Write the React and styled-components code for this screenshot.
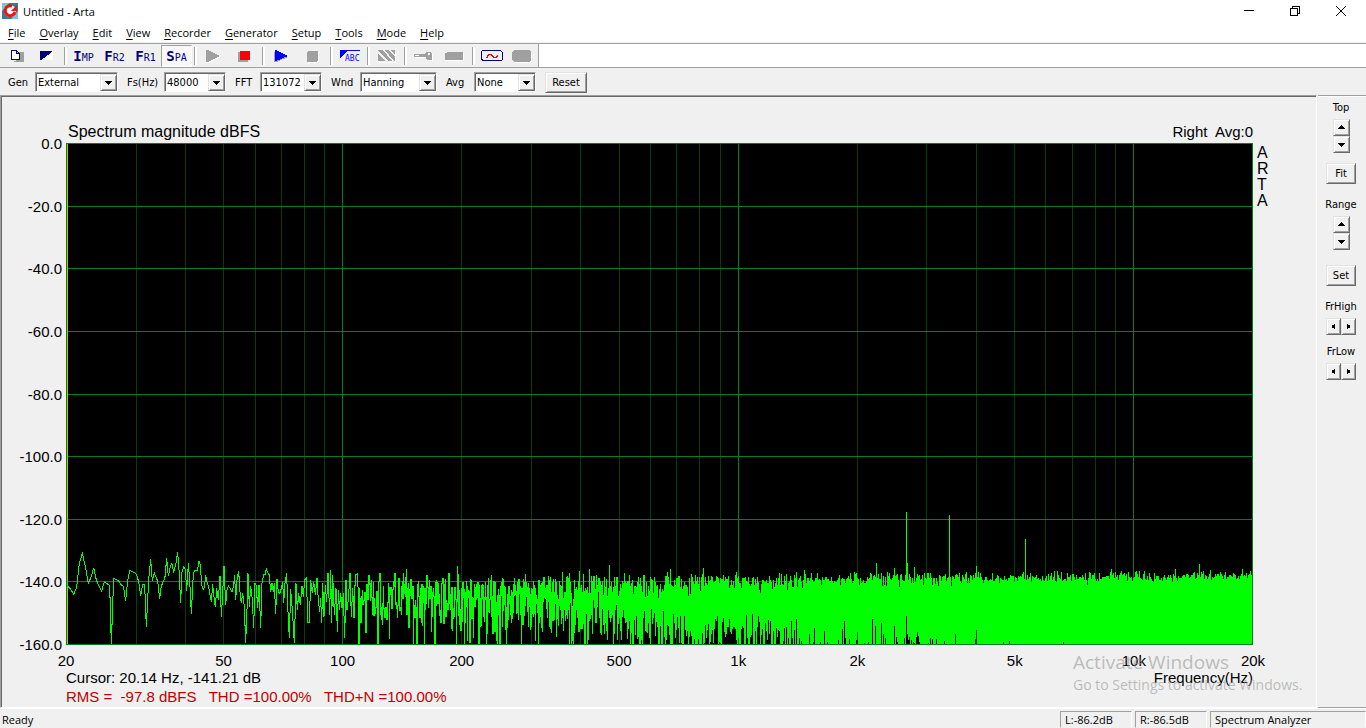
import styled, { createGlobalStyle, css } from 'styled-components';

const ui = '"Open Sans", "Noto Sans", sans-serif';
const dialog = '"DejaVu Sans Condensed", "DejaVu Sans", sans-serif';
const plotFont = '"Liberation Sans", Arial, sans-serif';

const GlobalStyle = createGlobalStyle`
  * {
    box-sizing: border-box;
  }
  body {
    margin: 0;
    background: #f0f0f0;
    color: #000;
    font-family: ${ui};
    font-size: 11px;
  }
  button,
  select {
    font: inherit;
    color: inherit;
    border-radius: 0;
  }
`;

const raised = css`
  background: #f0f0f0;
  border: 1px solid;
  border-color: #e3e3e3 #696969 #696969 #e3e3e3;
  box-shadow: inset 1px 1px 0 #fff, inset -1px -1px 0 #a0a0a0;
`;

const Window = styled.div`
  min-height: 100vh;
  display: flex;
  flex-direction: column;
`;

const TitleBar = styled.header`
  display: flex;
  align-items: center;
  height: 22px;
  padding: 0 2px;
  background: #fff;
  h1 {
    flex: 1;
    margin: 0 0 0 5px;
    font-size: 11px;
    font-weight: 400;
  }
`;

const WindowButton = styled.button`
  width: 46px;
  height: 22px;
  padding: 0;
  border: 0;
  background: none;
  svg {
    display: block;
    margin: 0 auto;
  }
`;

const MenuBar = styled.nav`
  display: flex;
  gap: 14px;
  height: 21px;
  padding: 0 8px;
  background: #fff;
  border-bottom: 1px solid #f0f0f0;
`;

const MenuItem = styled.button`
  padding: 1px 0 0;
  border: 0;
  background: none;
  line-height: 19px;
  u {
    text-underline-offset: 2px;
    text-decoration-skip-ink: none;
  }
`;

const ToolBar = styled.div`
  display: flex;
  height: 25px;
  background: #fff;
  border-top: 1px solid #a0a0a0;
  border-bottom: 1px solid #a0a0a0;
`;

const Tools = styled.div`
  display: flex;
  align-items: center;
  padding-top: 1px;
  background: #f0f0f0;
  border-right: 1px solid #a0a0a0;
`;

const ToolButton = styled.button`
  width: 31px;
  height: 22px;
  padding: 0;
  border: 1px solid transparent;
  background: none;
  color: #000080;
  font-family: 'DejaVu Sans Mono', monospace;
  font-size: 10px;
  line-height: 20px;
  b {
    font-size: 14px;
  }
  svg {
    display: block;
    margin: -1px;
  }
  ${({ $pressed }) =>
    $pressed &&
    css`
      background: #f8f8f8;
      border-color: #a0a0a0 #fff #fff #a0a0a0;
    `}
`;

const Separator = styled.span`
  width: 6px;
  height: 18px;
  &::before {
    content: '';
    display: block;
    width: 2px;
    height: 100%;
    margin-left: 2px;
    border-left: 1px solid #a0a0a0;
    background: #fff;
  }
`;

const SettingsBar = styled.div`
  display: flex;
  align-items: center;
  gap: 9px;
  height: 27px;
  padding: 1px 8px 0;
  font-family: ${dialog};
`;

const Field = styled.div`
  display: flex;
  align-items: center;
  label {
    min-width: ${({ $label }) => $label}px;
  }
`;

const Combo = styled.div`
  display: grid;
  width: ${({ $width }) => $width}px;
  height: 20px;
  background: #fff;
  border: 1px solid;
  border-color: #a0a0a0 #fff #fff #a0a0a0;
  box-shadow: inset 1px 1px 0 #696969;
  select,
  span {
    grid-area: 1 / 1;
  }
  select {
    appearance: none;
    padding: 0 0 0 2px;
    border: 0;
    background: none;
  }
  span {
    ${raised}
    justify-self: end;
    display: grid;
    place-items: center;
    width: 17px;
    margin: 1px 0 0;
    pointer-events: none;
  }
`;

const PushButton = styled.button`
  ${raised}
  width: ${({ $width }) => $width}px;
  height: 21px;
  padding: 0;
`;

const Workspace = styled.div`
  flex: 1;
  display: flex;
`;

const PlotPanel = styled.main`
  position: relative;
  flex: 1;
  display: grid;
  grid-template-columns: 64px 1fr 62px;
  grid-template-rows: auto 1fr auto auto;
  padding: 27px 1px 1px;
  border: 1px solid;
  border-color: #a0a0a0 #fff #fff #a0a0a0;
  box-shadow: inset 1px 1px 0 #696969;
  font-family: ${plotFont};
  font-size: 15px;
  line-height: 18px;
`;

const PlotHeader = styled.div`
  grid-column: 2;
  display: flex;
  justify-content: space-between;
  padding: 0 0 2px 2px;
  white-space: pre;
  h2 {
    margin: 0;
    font-size: 16px;
    font-weight: 400;
  }
`;

const LevelAxis = styled.div`
  grid-column: 1;
  grid-row: 2;
  display: flex;
  flex-direction: column;
  justify-content: space-between;
  margin: -8px 0 -9px;
  padding-right: 4px;
  text-align: right;
`;

const Plot = styled.svg`
  grid-column: 2;
  grid-row: 2;
  display: block;
  width: 100%;
  height: 100%;
  min-height: 200px;
  background: #000;
  shape-rendering: crispEdges;
  * {
    fill: none;
    vector-effect: non-scaling-stroke;
  }
`;

const Brand = styled.div`
  grid-column: 3;
  grid-row: 2;
  display: flex;
  flex-direction: column;
  padding: 2px 0 0 4px;
  font-size: 16px;
  line-height: 16px;
`;

const FrequencyAxis = styled.div`
  grid-column: 2;
  display: flex;
  padding-top: 7px;
  height: 24px;
`;

const FrequencyTick = styled.div`
  flex: ${({ $span }) => $span} 0 0;
  min-width: 0;
  span {
    display: inline-block;
    transform: translateX(-50%);
  }
`;

const Readout = styled.div`
  grid-column: 2;
  display: grid;
  grid-template-columns: 1fr auto;
  row-gap: 1px;
  white-space: pre;
  p {
    margin: 0;
  }
  .rms {
    color: #c00000;
  }
`;

const Watermark = styled.div`
  position: absolute;
  right: 6px;
  bottom: 12px;
  width: 237px;
  color: rgba(150, 150, 150, 0.6);
  font-family: ${ui};
  font-size: 14px;
  white-space: nowrap;
  pointer-events: none;
  p {
    margin: 0;
    line-height: 20px;
  }
  p:first-child {
    font-size: 19px;
    line-height: 25px;
  }
`;

const SideBar = styled.aside`
  display: flex;
  flex-direction: column;
  width: 48px;
  margin-left: 1px;
  padding: 4px 2px 0 0;
  border-top: 1px solid #a0a0a0;
  border-bottom: 1px solid #a0a0a0;
  box-shadow: inset 0 1px 0 #fff;
  font-family: ${dialog};
`;

const ControlGroup = styled.div`
  display: flex;
  flex-direction: column;
  align-items: center;
  padding-bottom: ${({ $after }) => $after}px;
  line-height: 16px;
  ${PushButton} {
    margin-top: ${({ $space }) => $space}px;
  }
`;

const Spinner = styled.div`
  display: flex;
  flex-direction: ${({ $horizontal }) => ($horizontal ? 'row' : 'column')};
  margin-top: 3px;
`;

const SpinButton = styled.button`
  ${raised}
  display: grid;
  place-items: center;
  width: ${({ $horizontal }) => ($horizontal ? 15 : 17)}px;
  height: 17px;
  padding: 0;
`;

const StatusBar = styled.footer`
  display: flex;
  gap: 3px;
  height: 20px;
  padding-top: 2px;
  border-top: 1px solid #fff;
  line-height: 17px;
`;

const StatusPane = styled.div`
  width: ${({ $width }) => ($width ? `${$width}px` : 'auto')};
  flex: ${({ $grow }) => ($grow ? 1 : 'none')};
  padding-left: ${({ $plain }) => ($plain ? 2 : 4)}px;
  ${({ $plain }) =>
    !$plain &&
    css`
      border: 1px solid;
      border-color: #a0a0a0 #fff transparent #a0a0a0;
      line-height: 15px;
    `}
`;

const arrows = {
  up: 'M4 2h1v1h1v1h1v1h1v1H1V5h1V4h1V3h1z',
  down: 'M1 3h7v1H7v1H6v1H5v1H4V6H3V5H2V4H1z',
  left: 'M6 1v7H5V7H4V6H3V5H2V4h1V3h1V2h1V1z',
  right: 'M3 1v7h1V7h1V6h1V5h1V4H6V3H5V2H4V1z',
};

const Arrow = ({ to, size = 9 }) => (
  <svg width={size} height={size} viewBox="0 0 9 9" shapeRendering="crispEdges">
    <path d={arrows[to]} />
  </svg>
);

const Glyph = ({ children }) => (
  <svg width="31" height="22" viewBox="0 0 31 22" shapeRendering="crispEdges">
    {children}
  </svg>
);

const Disabled = ({ d }) => (
  <>
    <path d={d} fill="#fff" transform="translate(1 1)" />
    <path d={d} fill="#a0a0a0" />
  </>
);

const tools = [
  [
    {
      name: 'Copy',
      icon: (
        <>
          <path d="M16 7h8v10H14v-1h2z" fill="#a0a0a0" />
          <path
            d="M11.5 5.5h5l3 3v6h-8zM16.5 5.5v3h3"
            fill="#fff"
            stroke="#000080"
          />
        </>
      ),
    },
    {
      name: 'Invert colours',
      icon: (
        <>
          <path d="M22 6v9H13z" fill="#fff" />
          <path
            d="M9 6h12v1h-1v1h-1v1h-1v1h-2v1h-1v1h-1v1h-2v1h-1v1H9z"
            fill="#000080"
          />
        </>
      ),
    },
  ],
  [
    { name: 'Imp' },
    { name: 'Fr2' },
    { name: 'Fr1' },
    { name: 'Spa', pressed: true },
  ],
  [
    { name: 'Generator on', icon: <Disabled d="M8 5h2l12 6-12 6H8z" /> },
    {
      name: 'Stop',
      icon: (
        <>
          <path d="M9 7h10v10H9z" fill="#a0a0a0" />
          <path d="M11 6h10v9H11z" fill="#f00" />
        </>
      ),
    },
  ],
  [
    {
      name: 'Record',
      icon: (
        <>
          <path d="M8 7h3l11 5-11 5H8z" fill="#a0a0a0" />
          <path d="M9 5h1l12 6-12 5H9z" fill="#00f" />
        </>
      ),
    },
    {
      name: 'Stop recording',
      icon: <Disabled d="M11 6h10v9l-2 2h-9V8z" />,
    },
  ],
  [
    {
      name: 'Overlay text',
      icon: (
        <>
          <path d="M6 5h20v1H13l-7 7z" fill="#00f" />
          <text
            x="11"
            y="16"
            fill="#00f"
            fontFamily="DejaVu Sans Mono, monospace"
            fontSize="8"
          >
            ABC
          </text>
        </>
      ),
    },
  ],
  [
    {
      name: 'Hatch',
      icon: (
        <>
          <path
            d="M7.5 16V6H23.5V16z"
            fill="none"
            stroke="#fff"
            transform="translate(1 1)"
          />
          <path
            d="M7 5h5l9 11h-4L7 6zM14 5h4l6 7v4h-1zM20 5h4v5zM7 8l7 8H7z"
            fill="#a0a0a0"
          />
        </>
      ),
    },
  ],
  [
    {
      name: 'Calibrate',
      icon: (
        <Disabled d="M6 9h11V8h1V7h5v1h1v7h-5v-1h-1v-2H6zm1 1v1h4v-1zm13-2v2h2V8z" />
      ),
    },
    {
      name: 'Level',
      icon: <Disabled d="M8 7h15l1 1v7H6V8h2z" />,
    },
  ],
  [
    {
      name: 'Signal',
      icon: (
        <>
          <path
            d="M6.5 5.5h18l2 2v7l-1 1h-18l-2-1v-8z"
            fill="#f0f0f0"
            stroke="#000080"
          />
          <path
            d="M10 12.5h1v-1l2-2h2l1 1 1 1 1 1h2l1-1v-1h1"
            fill="none"
            stroke="#f00"
          />
        </>
      ),
    },
    {
      name: 'Signal setup',
      icon: <Disabled d="M7 5h15l2 2v8l-2 2H7l-2-2V7z" />,
    },
  ],
];

const menus = [
  'File',
  'Overlay',
  'Edit',
  'View',
  'Recorder',
  'Generator',
  'Setup',
  'Tools',
  'Mode',
  'Help',
];

const fields = [
  { id: 'gen', label: 'Gen', value: 'External', width: 83, labelWidth: 27 },
  { id: 'fs', label: 'Fs(Hz)', value: '48000', width: 62, labelWidth: 37 },
  { id: 'fft', label: 'FFT', value: '131072', width: 62, labelWidth: 25 },
  { id: 'wnd', label: 'Wnd', value: 'Hanning', width: 77, labelWidth: 29 },
  { id: 'avg', label: 'Avg', value: 'None', width: 62, labelWidth: 28 },
];

const levels = [0, -20, -40, -60, -80, -100, -120, -140, -160];

// label and distance in decades to the next label
const frequencies = [
  ['20', 0.398],
  ['50', 0.301],
  ['100', 0.301],
  ['200', 0.398],
  ['500', 0.301],
  ['1k', 0.301],
  ['2k', 0.398],
  ['5k', 0.301],
  ['10k', 0.301],
  ['20k', 0],
];

const W = 1187;
const H = 502;
const DECADE = 395.3;
const toX = (f) => Math.round(DECADE * Math.log10(f / 20)) + 0.5;
const toY = (db) => (-db / 160) * (H - 1);

const gridFrequencies = [10, 100, 1000]
  .flatMap((decade) => [1, 2, 3, 4, 5, 6, 7, 8, 9].map((n) => n * decade))
  .concat(10000)
  .filter((f) => f > 20);

// the sparse bins below 110 Hz, three units to a pixel
const lowBins =
  '198,222 203,258 212,268 221,283 230,262 238,190 247,160 257,205 265,250 273,232 281,203 289,240 297,258 305,273 313,245 321,251 329,257 334,431 341,235 348,239 356,243 363,254 370,258 377,302 383,242 389,211 396,214 403,218 409,222 416,245 422,288 428,253 434,255 439,380 446,240 452,178 457,243 463,220 468,232 473,243 479,296 484,258 490,245 495,230 500,175 505,228 510,205 515,188 521,215 527,195 533,157 537,210 542,308 546,215 551,200 556,208 560,272 565,190 569,240 574,341 579,240 583,210 588,212 592,212 597,183 601,195 605,255 610,268 614,258 617,225 622,250 626,262 630,285 634,305 638,253 642,290 646,322 650,265 655,300 660,228 664,350 668,280 672,198 677,315 681,270 685,258 691,265 696,275 700,262 704,225 707,300 711,240 716,213 720,275 724,310 728,280 733,320 737,430 741,330 744,220 748,320 752,258 757,300 761,385 765,250 769,258 773,325 777,255 782,385 786,250 791,225 795,225 799,207 804,220 808,225 812,275 816,250 820,275 823,250 827,343 831,238 835,275 840,280 844,265 848,245 851,310 855,250 860,220 863,315 868,415 872,268 877,330 883,430 888,250 892,330 896,280 901,315 906,258 910,290 914,240 919,235 924,368 928,368 932,240 937,280 941,245 946,285 951,233 955,300 959,335 962,295 965,368 968,250 972,350 976,255 980,305 984,218 989,345 992,210 995,370 998,225 1003,345 1008,265 1012,395 1015,270 1018,330 1022,280 1026,325 1030,280 1034,415 1038,240 1041,330 1045,300 1050,218 1054,350 1058,265 1062,355 1066,225 1072,222 1076,300';

// tones that stand out of the noise: column -> [top, bottom]
const tones = {
  840: [369, 472],
  841: [420, 490],
  883: [372, 501],
  959: [396, 501],
};

const makeNoise = () => {
  let seed = 48000;
  const random = () => {
    seed = (seed + 0x6d2b79f5) | 0;
    let t = Math.imul(seed ^ (seed >>> 15), 1 | seed);
    t = (t + Math.imul(t ^ (t >>> 7), 61 | t)) ^ t;
    return ((t ^ (t >>> 14)) >>> 0) / 4294967296;
  };
  const gauss = () => {
    const r = Math.sqrt(-2 * Math.log(random() + 1e-12));
    const a = 2 * Math.PI * random();
    return [r * Math.cos(a), r * Math.sin(a)];
  };

  const columns = new Map();
  let a = gauss();
  let b = gauss();
  let last = null;
  for (let k = 299; k < 54613; k++) {
    const f = (k * 48000) / 131072;
    const c = gauss();
    // Hanning window in the frequency domain
    const re = b[0] - (a[0] + c[0]) / 2;
    const im = b[1] - (a[1] + c[1]) / 2;
    const floor = -143.6 - Math.log10(f / 100);
    const db = floor + 10 * Math.log10((re * re + im * im) / 3 + 1e-9);
    const y = Math.min(H - 1, Math.round(toY(db)));
    const x = Math.floor(DECADE * Math.log10(f / 20));
    const col = columns.get(x) || [last ?? y, last ?? y];
    columns.set(x, [Math.min(col[0], y), Math.max(col[1], y)]);
    last = y;
    a = b;
    b = c;
  }

  return [...columns]
    .filter(([x]) => x > 291 && x < W - 1)
    .map(([x, range]) => {
      const [top, bottom] = tones[x] || range;
      return `M${x + 0.5} ${top}V${bottom + 1}`;
    })
    .join('');
};

const noise = makeNoise();

const Spectrum = () => (
  <Plot viewBox={`0 0 ${W} ${H}`} preserveAspectRatio="none">
    {gridFrequencies.map((f) => (
      <path
        key={f}
        d={`M${toX(f)} 0V${H}`}
        stroke={[100, 1000, 10000].includes(f) ? '#008020' : '#004010'}
      />
    ))}
    {levels.map((db) => (
      <path
        key={db}
        d={`M0 ${Math.round(toY(db)) + 0.5}H${W}`}
        stroke="#008020"
      />
    ))}
    <path d={`M1.5 0V${H}`} stroke="#c0c000" />
    <polyline
      points={lowBins}
      transform="translate(-66 357) scale(0.33333)"
      stroke="#0f0"
    />
    <path d={noise} stroke="#0f0" />
    <path d={`M0.5 0.5H${W - 0.5}V${H - 0.5}H0.5z`} stroke="#008020" />
  </Plot>
);

const App = () => (
  <>
    <GlobalStyle />
    <Window>
      <TitleBar>
        <svg width="16" height="16" viewBox="0 0 16 16">
          <rect width="16" height="16" fill="#2f7f96" />
          <path d="M0 0h7L0 8zM16 16H9l7-8z" fill="#7fc4d4" />
          <circle cx="8" cy="8" r="6" fill="#fff" />
          <path
            d="M13 9A5 5 0 1 1 10 3"
            fill="none"
            stroke="#f01010"
            strokeWidth="3"
          />
          <path d="M9 8h6V2z" fill="#f01010" />
        </svg>
        <h1>Untitled - Arta</h1>
        <WindowButton aria-label="Minimize">
          <svg width="10" height="10" shapeRendering="crispEdges">
            <path d="M0 4.5h10" stroke="#000" />
          </svg>
        </WindowButton>
        <WindowButton aria-label="Restore">
          <svg width="10" height="10" shapeRendering="crispEdges">
            <path
              d="M0.5 2.5h7v7h-7zM2.5 2.5v-2h7v7h-2"
              fill="none"
              stroke="#000"
            />
          </svg>
        </WindowButton>
        <WindowButton aria-label="Close">
          <svg width="10" height="10">
            <path d="M0 0l10 10M10 0L0 10" stroke="#000" />
          </svg>
        </WindowButton>
      </TitleBar>

      <MenuBar>
        {menus.map((menu) => (
          <MenuItem key={menu}>
            <u>{menu[0]}</u>
            {menu.slice(1)}
          </MenuItem>
        ))}
      </MenuBar>

      <ToolBar>
        <Tools>
          {tools.map((group, i) => [
            i > 0 && <Separator key={`sep${i}`} />,
            ...group.map(({ name, icon, pressed }) => (
              <ToolButton key={name} $pressed={pressed} aria-label={name}>
                {icon ? (
                  <Glyph>{icon}</Glyph>
                ) : (
                  <>
                    <b>{name[0]}</b>
                    {name.slice(1).toUpperCase()}
                  </>
                )}
              </ToolButton>
            )),
          ])}
        </Tools>
      </ToolBar>

      <SettingsBar>
        {fields.map(({ id, label, value, width, labelWidth }) => (
          <Field key={id} $label={labelWidth}>
            <label htmlFor={id}>{label}</label>
            <Combo $width={width}>
              <select id={id} defaultValue={value}>
                <option>{value}</option>
              </select>
              <span>
                <Arrow to="down" />
              </span>
            </Combo>
          </Field>
        ))}
        <PushButton $width={42}>Reset</PushButton>
      </SettingsBar>

      <Workspace>
        <PlotPanel>
          <PlotHeader>
            <h2>Spectrum magnitude dBFS</h2>
            <span>{'Right  Avg:0'}</span>
          </PlotHeader>
          <LevelAxis>
            {levels.map((db) => (
              <span key={db}>{db.toFixed(1)}</span>
            ))}
          </LevelAxis>
          <Spectrum />
          <Brand>
            {[...'ARTA'].map((letter, i) => (
              <span key={i}>{letter}</span>
            ))}
          </Brand>
          <FrequencyAxis>
            {frequencies.map(([label, span]) => (
              <FrequencyTick key={label} $span={span}>
                <span>{label}</span>
              </FrequencyTick>
            ))}
          </FrequencyAxis>
          <Readout>
            <p>Cursor: 20.14 Hz, -141.21 dB</p>
            <p>Frequency(Hz)</p>
            <p className="rms">
              {'RMS =  -97.8 dBFS   THD =100.00%   THD+N =100.00%'}
            </p>
          </Readout>
          <Watermark>
            <p>Activate Windows</p>
            <p>Go to Settings to activate Windows.</p>
          </Watermark>
        </PlotPanel>

        <SideBar>
          {[
            { label: 'Top', action: 'Fit', space: 10 },
            { label: 'Range', action: 'Set', space: 15 },
          ].map(({ label, action, space }) => (
            <ControlGroup key={label} $space={space} $after={13}>
              {label}
              <Spinner>
                <SpinButton aria-label={`${label} up`}>
                  <Arrow to="up" />
                </SpinButton>
                <SpinButton aria-label={`${label} down`}>
                  <Arrow to="down" />
                </SpinButton>
              </Spinner>
              <PushButton $width={30}>{action}</PushButton>
            </ControlGroup>
          ))}
          {['FrHigh', 'FrLow'].map((label) => (
            <ControlGroup key={label} $after={9}>
              {label}
              <Spinner $horizontal>
                <SpinButton $horizontal aria-label={`${label} down`}>
                  <Arrow to="left" size={7} />
                </SpinButton>
                <SpinButton $horizontal aria-label={`${label} up`}>
                  <Arrow to="right" size={7} />
                </SpinButton>
              </Spinner>
            </ControlGroup>
          ))}
        </SideBar>
      </Workspace>

      <StatusBar>
        <StatusPane $plain $grow>
          Ready
        </StatusPane>
        <StatusPane $width={72}>L:-86.2dB</StatusPane>
        <StatusPane $width={72}>R:-86.5dB</StatusPane>
        <StatusPane $width={156}>Spectrum Analyzer</StatusPane>
      </StatusBar>
    </Window>
  </>
);

export default App;
